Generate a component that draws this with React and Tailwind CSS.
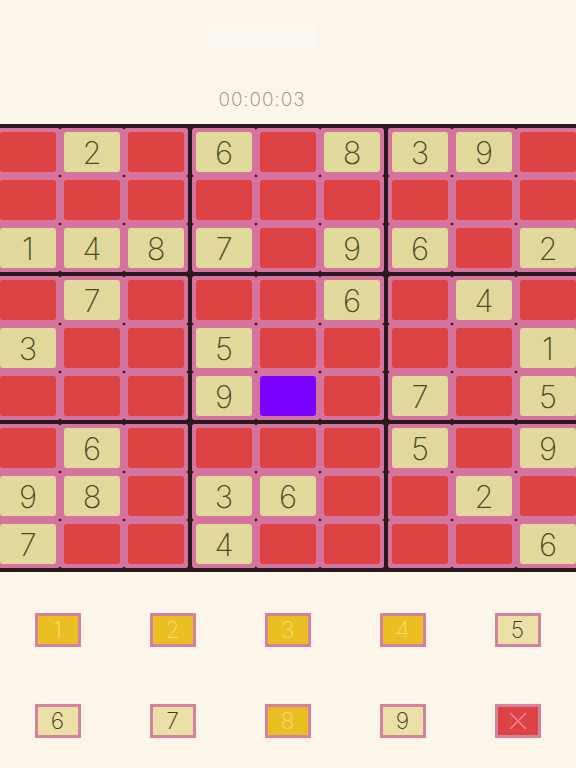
import React from "react";

const GRID = [
  [0, 2, 0, 6, 0, 8, 3, 9, 0],
  [0, 0, 0, 0, 0, 0, 0, 0, 0],
  [1, 4, 8, 7, 0, 9, 6, 0, 2],
  [0, 7, 0, 0, 0, 6, 0, 4, 0],
  [3, 0, 0, 5, 0, 0, 0, 0, 1],
  [0, 0, 0, 9, -1, 0, 7, 0, 5],
  [0, 6, 0, 0, 0, 0, 5, 0, 9],
  [9, 8, 0, 3, 6, 0, 0, 2, 0],
  [7, 0, 0, 4, 0, 0, 0, 0, 6],
];

const DOTS =
  "bg-[radial-gradient(circle_at_0_0,#2b1b22_1.1px,transparent_1.7px),radial-gradient(circle_at_100%_0,#2b1b22_1.1px,transparent_1.7px),radial-gradient(circle_at_0_100%,#2b1b22_1.1px,transparent_1.7px),radial-gradient(circle_at_100%_100%,#2b1b22_1.1px,transparent_1.7px)]";

function Cell({ v }) {
  let cls = "bg-[#dd4343]";
  if (v > 0) cls = "bg-[#e2d89c]";
  if (v === -1) cls = "bg-[#7a00ff]";
  return (
    <div className={`w-16 h-12 p-1 ${DOTS}`}>
      <div
        className={`w-full h-full rounded-[3px] flex items-center justify-center text-[31px] leading-none font-extralight text-[#4e4a2a] ${cls}`}
      >
        {v > 0 ? v : ""}
      </div>
    </div>
  );
}

function Box({ br, bc }) {
  const rows = [0, 1, 2].map((r) => GRID[br * 3 + r].slice(bc * 3, bc * 3 + 3));
  return (
    <div className="flex flex-col">
      {rows.map((row, i) => (
        <div key={i} className="flex">
          {row.map((v, j) => (
            <Cell key={j} v={v} />
          ))}
        </div>
      ))}
    </div>
  );
}

function BandRow({ br }) {
  return (
    <div className="flex">
      <Box br={br} bc={0} />
      <div className="w-1 bg-[#2a1a20]" />
      <Box br={br} bc={1} />
      <div className="w-1 bg-[#2a1a20]" />
      <Box br={br} bc={2} />
    </div>
  );
}

function PadButton({ label, kind }) {
  const styles = {
    used: "bg-[#e9bf22] text-[#f6dc7a]",
    open: "bg-[#ebe0a6] text-[#3c3a2c]",
    clear: "bg-[#dd4343] text-[#f08aa8]",
  };
  return (
    <div
      className={`w-[46px] h-[34px] border-[3px] border-[#d4829f] flex items-center justify-center text-[23px] font-extralight leading-none ${styles[kind]}`}
    >
      {label === "x" ? (
        <svg width="22" height="22" viewBox="0 0 22 22">
          <path d="M3 3 L19 19 M19 3 L3 19" stroke="#f08aa8" strokeWidth="1.3" fill="none" />
        </svg>
      ) : (
        label
      )}
    </div>
  );
}

export default function App() {
  const pad1 = [
    ["1", "used"],
    ["2", "used"],
    ["3", "used"],
    ["4", "used"],
    ["5", "open"],
  ];
  const pad2 = [
    ["6", "open"],
    ["7", "open"],
    ["8", "used"],
    ["9", "open"],
    ["x", "clear"],
  ];
  return (
    <div
      className="w-[576px] h-[768px] overflow-hidden bg-[#fbf5ea] flex flex-col"
      style={{ fontFamily: "Inter, 'Liberation Sans', sans-serif" }}
    >
      <div className="h-[124px] flex flex-col items-center pr-[52px]">
        <div className="mt-[24px] w-[107px] h-[24px] bg-[#fdf9f0]" />
        <div className="mt-[42px] text-[19px] leading-none font-extralight tracking-[1px] text-[#8a8782]">
          00:00:03
        </div>
      </div>
      <div className="w-[584px] -ml-1 bg-[#d5739f] border-y-4 border-[#2a1a20] flex flex-col">
        <BandRow br={0} />
        <div className="h-1 bg-[#2a1a20]" />
        <BandRow br={1} />
        <div className="h-1 bg-[#2a1a20]" />
        <BandRow br={2} />
      </div>
      <div className="mt-[41px] grid grid-cols-5 w-[575px]">
        {pad1.map(([l, k]) => (
          <div key={l} className="flex justify-center">
            <PadButton label={l} kind={k} />
          </div>
        ))}
      </div>
      <div className="mt-[57px] grid grid-cols-5 w-[575px]">
        {pad2.map(([l, k]) => (
          <div key={l} className="flex justify-center">
            <PadButton label={l} kind={k} />
          </div>
        ))}
      </div>
    </div>
  );
}
